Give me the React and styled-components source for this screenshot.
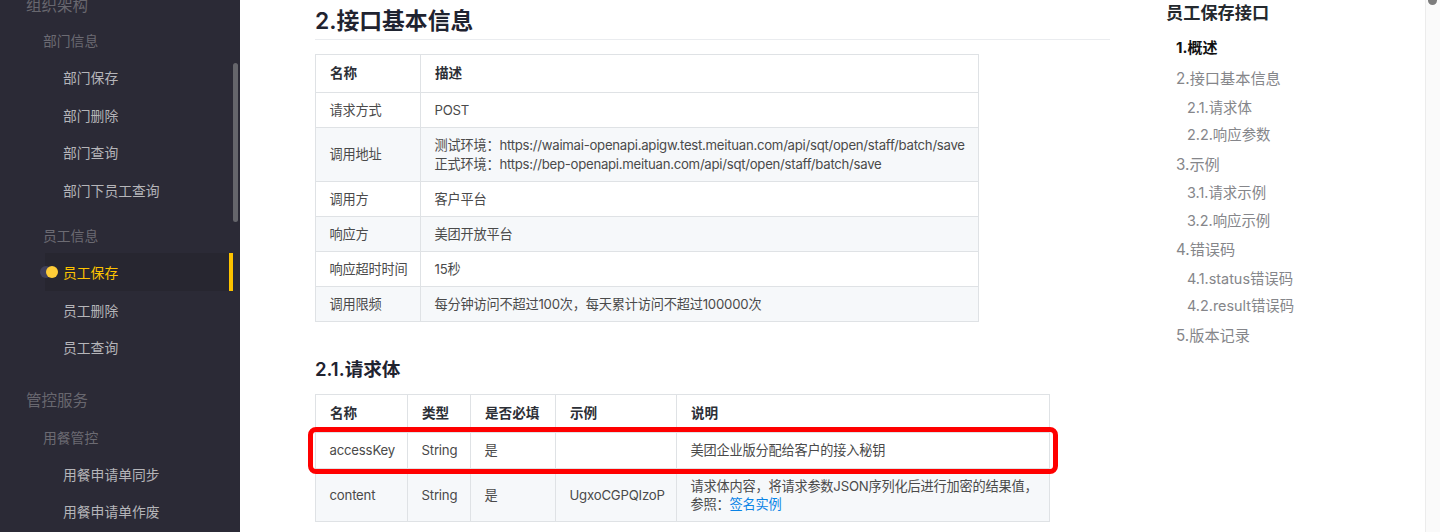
import React from "react";
import styled, { createGlobalStyle } from "styled-components";

const Global = createGlobalStyle`
  html, body { margin: 0; padding: 0; height: 100%; background: #fff; overflow: hidden; }
  * { box-sizing: border-box; }
  body { font-family: Inter, "Noto Sans CJK SC", "Noto Sans", sans-serif; }
`;

const Page = styled.div`
  position: relative;
  display: flex;
  width: 1440px;
  height: 532px;
  overflow: hidden;
`;

/* ---------- left navigation ---------- */
const Sidebar = styled.aside`
  position: relative;
  flex: 0 0 240px;
  height: 532px;
  overflow: hidden;
  background: #2b2a36;
`;
const NavList = styled.nav`
  display: flex;
  flex-direction: column;
  margin-top: -14px;
`;
const NavTop = styled.div`
  flex: none;
  height: 36px;
  margin-top: ${(p) => p.$top || 0}px;
  padding-left: 26px;
  display: flex;
  align-items: center;
  font-size: 15.5px;
  color: #68676f;
`;
const NavGroup = styled.div`
  flex: none;
  height: 36px;
  margin-top: ${(p) => p.$top || 0}px;
  padding-left: 43px;
  display: flex;
  align-items: center;
  font-size: 13.8px;
  color: #6c6b73;
`;
const NavItem = styled.div`
  position: relative;
  flex: none;
  height: 37.75px;
  margin-left: 45px;
  padding-left: 18px;
  display: flex;
  align-items: center;
  font-size: 13.8px;
  color: ${(p) => (p.$active ? "#fdc300" : "#b5b5b9")};
  background: ${(p) => (p.$active ? "#272630" : "transparent")};
  margin-right: 7px;
  border-right: ${(p) => (p.$active ? "4px solid #fdc300" : "none")};
`;
const DotShade = styled.span`
  position: absolute;
  left: -5px;
  top: 13px;
  width: 12px;
  height: 12px;
  border-radius: 50%;
  background: #40405a;
`;
const Dot = styled.span`
  position: absolute;
  left: 1px;
  top: 13px;
  width: 12px;
  height: 12px;
  border-radius: 50%;
  background: #ffcd38;
`;
const NavThumb = styled.div`
  position: absolute;
  left: 233px;
  top: 63px;
  width: 5px;
  height: 159px;
  border-radius: 3px;
  background: #65656b;
`;

/* ---------- document ---------- */
const Main = styled.main`
  flex: 0 0 870px;
  padding-left: 75px;
`;
const H2 = styled.h2`
  margin: 0 0 14px;
  height: 40px;
  padding-top: 3px;
  font-size: 22.8px;
  line-height: 36px;
  font-weight: 600;
  color: #1f2330;
  border-bottom: 1px solid #eaecef;
`;
const H3 = styled.h3`
  margin: 33.5px 0 11.5px;
  height: 27px;
  font-size: 18.6px;
  line-height: 27px;
  font-weight: 600;
  color: #1f2330;
`;
const TableWrap = styled.div`
  position: relative;
  width: ${(p) => p.$w}px;
`;
const Table = styled.table`
  width: 100%;
  table-layout: fixed;
  border-collapse: collapse;
  font-size: 13.2px;
  line-height: 18.5px;
  letter-spacing: -0.2px;
  color: #4a4a4a;
  tbody tr:nth-child(even) { background: #f6f8fa; }
`;
const Th = styled.th`
  height: 38px;
  padding: 0 14px;
  text-align: left;
  font-size: 13.6px;
  font-weight: 600;
  letter-spacing: 0;
  color: #2c2f36;
  border: 1px solid #dfe2e5;
  white-space: nowrap;
`;
const Td = styled.td`
  height: ${(p) => p.$h || 35}px;
  padding: 0 13.5px;
  border: 1px solid #dfe2e5;
  white-space: nowrap;
`;
const Url = styled.span`
  letter-spacing: -0.27px;
`;
const Link = styled.a`
  color: #0a84e6;
  text-decoration: none;
`;
const RedBox = styled.div`
  position: absolute;
  left: -7px;
  right: -8px;
  top: 33px;
  height: 47px;
  border: 5.5px solid #ff0000;
  border-radius: 8px;
  pointer-events: none;
`;

/* ---------- table of contents ---------- */
const Toc = styled.aside`
  flex: 0 0 315px;
  padding-left: 56px;
`;
const TocTitle = styled.div`
  height: 26px;
  line-height: 26px;
  font-size: 17.2px;
  font-weight: 600;
  color: #24292e;
`;
const TocList = styled.div`
  display: flex;
  flex-direction: column;
  margin-top: 5.25px;
`;
const TocItem = styled.div`
  flex: none;
  height: ${(p) => (p.$sub ? 27.5 : 30.5)}px;
  display: flex;
  align-items: center;
  padding-left: ${(p) => (p.$sub ? 21 : 10)}px;
  font-size: ${(p) => (p.$sub ? 14.4 : p.$on ? 15 : 15.2)}px;
  font-weight: ${(p) => (p.$on ? 700 : 400)};
  color: ${(p) => (p.$on ? "#111" : "#85868a")};
`;

const Scrollbar = styled.div`
  flex: 0 0 15px;
  height: 532px;
  background: #fafafa;
  border-left: 1px solid #ececec;
`;
const ScrollThumb = styled.div`
  width: 9px;
  height: 5px;
  margin-left: 2px;
  border-radius: 0 0 5px 5px;
  background: #7d7d7d;
`;

/* ---------- watermark ---------- */
const Watermark = styled.svg`
  position: absolute;
  left: 240px;
  top: 0;
  width: 1200px;
  height: 532px;
  pointer-events: none;
`;
const WmText = styled.text`
  font-size: 14px;
  fill: #000;
  fill-opacity: 0.018;
`;

const marks = [];
for (let r = -1; r < 7; r++) {
  for (let c = -1; c < 8; c++) {
    marks.push([103 + c * 190 + (r % 2 !== 0 ? -95 : 0), 91 + r * 93]);
  }
}

const rows1 = [
  ["请求方式", "POST"],
  ["调用地址", null],
  ["调用方", "客户平台"],
  ["响应方", "美团开放平台"],
  ["响应超时时间", "15秒"],
  ["调用限频", "每分钟访问不超过100次，每天累计访问不超过100000次"],
];

const toc = [
  ["1.概述", 0, 1],
  ["2.接口基本信息", 0],
  ["2.1.请求体", 1],
  ["2.2.响应参数", 1],
  ["3.示例", 0],
  ["3.1.请求示例", 1],
  ["3.2.响应示例", 1],
  ["4.错误码", 0],
  ["4.1.status错误码", 1],
  ["4.2.result错误码", 1],
  ["5.版本记录", 0],
];

export default function App() {
  return (
    <Page>
      <Global />
      <Sidebar>
        <NavList>
          <NavTop>组织架构</NavTop>
          <NavGroup>部门信息</NavGroup>
          <NavItem>部门保存</NavItem>
          <NavItem>部门删除</NavItem>
          <NavItem>部门查询</NavItem>
          <NavItem>部门下员工查询</NavItem>
          <NavGroup $top={8}>员工信息</NavGroup>
          <NavItem $active>
            <DotShade />
            <Dot />
            员工保存
          </NavItem>
          <NavItem>员工删除</NavItem>
          <NavItem>员工查询</NavItem>
          <NavTop $top={15}>管控服务</NavTop>
          <NavGroup $top={1.5}>用餐管控</NavGroup>
          <NavItem>用餐申请单同步</NavItem>
          <NavItem>用餐申请单作废</NavItem>
        </NavList>
        <NavThumb />
      </Sidebar>

      <Main>
        <H2>2.接口基本信息</H2>
        <TableWrap $w={664}>
          <Table>
            <colgroup>
              <col style={{ width: 105 }} />
              <col />
            </colgroup>
            <thead>
              <tr>
                <Th>名称</Th>
                <Th>描述</Th>
              </tr>
            </thead>
            <tbody>
              {rows1.map(([k, v]) => (
                <tr key={k}>
                  <Td $h={v === null ? 54 : 35}>{k}</Td>
                  <Td $h={v === null ? 54 : 35}>
                    {v === null ? (
                      <>
                        测试环境：<Url>https://waimai-openapi.apigw.test.meituan.com/api/sqt/open/staff/batch/save</Url>
                        <br />
                        正式环境：<Url>https://bep-openapi.meituan.com/api/sqt/open/staff/batch/save</Url>
                      </>
                    ) : (
                      v
                    )}
                  </Td>
                </tr>
              ))}
            </tbody>
          </Table>
        </TableWrap>

        <H3>2.1.请求体</H3>
        <TableWrap $w={735}>
          <Table>
            <colgroup>
              <col style={{ width: 92 }} />
              <col style={{ width: 63 }} />
              <col style={{ width: 85 }} />
              <col style={{ width: 121 }} />
              <col />
            </colgroup>
            <thead>
              <tr>
                <Th>名称</Th>
                <Th>类型</Th>
                <Th>是否必填</Th>
                <Th>示例</Th>
                <Th>说明</Th>
              </tr>
            </thead>
            <tbody>
              <tr>
                <Td $h={36}>accessKey</Td>
                <Td $h={36}>String</Td>
                <Td $h={36}>是</Td>
                <Td $h={36} />
                <Td $h={36}>美团企业版分配给客户的接入秘钥</Td>
              </tr>
              <tr>
                <Td $h={53}>content</Td>
                <Td $h={53}>String</Td>
                <Td $h={53}>是</Td>
                <Td $h={53}>UgxoCGPQIzoP</Td>
                <Td $h={53}>
                  请求体内容，将请求参数JSON序列化后进行加密的结果值，
                  <br />
                  参照：<Link>签名实例</Link>
                </Td>
              </tr>
            </tbody>
          </Table>
          <RedBox />
        </TableWrap>
      </Main>

      <Toc>
        <TocTitle>员工保存接口</TocTitle>
        <TocList>
          {toc.map(([t, s, on]) => (
            <TocItem key={t} $sub={!!s} $on={!!on}>
              {t}
            </TocItem>
          ))}
        </TocList>
      </Toc>

      <Scrollbar>
        <ScrollThumb />
      </Scrollbar>

      <Watermark viewBox="0 0 1200 532" aria-hidden="true">
        {marks.map(([x, y], i) => (
          <WmText key={i} transform={`translate(${x} ${y}) rotate(-45)`}>
            <tspan x="0" y="0">D7087F3DC1</tspan>
            <tspan x="0" y="19.5">ED5785ADEC</tspan>
            <tspan x="0" y="39">741098SAD10</tspan>
            <tspan x="0" y="58.5">0</tspan>
          </WmText>
        ))}
      </Watermark>
    </Page>
  );
}
